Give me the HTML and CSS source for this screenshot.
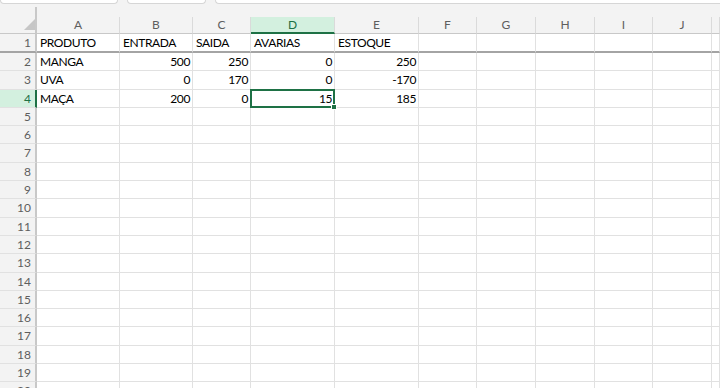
FILE: index.html
```html
<!DOCTYPE html>
<html lang="pt">
<head>
    <meta charset="UTF-8">
    <meta name="viewport" content="width=device-width, initial-scale=1.0">
    <title>Planilha de estoque</title>
    <link rel="stylesheet" href="styles.css">
</head>
<body>

<div class="top">
  <div class="tabs">
    <div class="tab tab-first"></div>
    <div class="tab tab-second"></div>
    <div class="tab tab-last"></div>
  </div>
  <div class="edge"></div>
</div>

<div id="sheet" class="sheet"></div>

<script>
    const data = [
        ["PRODUTO", "ENTRADA", "SAIDA", "AVARIAS", "ESTOQUE"],
        ["MANGA", 500, 250, 0, 250],
        ["UVA", 0, 170, 0, -170],
        ["MAÇA", 200, 0, 15, 185]
    ];
    // K is only a sliver at the right edge, so its letter is not shown
    const letters = ["A", "B", "C", "D", "E", "F", "G", "H", "I", "J", ""];
    const activeRow = 4
    const activeCol = 3
    const sheet = document.getElementById("sheet");

    function addCell(className, text) {
        const div = document.createElement("div");
        div.className = className;
        div.textContent = text;
        sheet.appendChild(div);
    }

    addCell("corner", "");
    letters.forEach(function(letter, i) {
        addCell("col-head" + (i === activeCol ? " active" : ""), letter);
    });

    for (let r = 1; r <= 20; r++) {
        let extra = r === 1 ? " frozen" : "";
        addCell("row-head" + extra + (r === activeRow ? " active" : ""), r);
        letters.forEach(function(letter, c) {
            const row = data[r - 1] || [];
            const value = row[c] === undefined ? "" : row[c];
            let cls = "cell" + extra;
            if (typeof value === "number") cls += " num";
            if (r === activeRow && c === activeCol) cls += " selected";
            addCell(cls, value);
        });
    }
</script>

</body>
</html>
```

FILE: styles.css
```css
body {
  margin: 0;
  background-color: #fff;
  font-family: Lato, "Liberation Sans", sans-serif;
  font-size: 12px;
  overflow: hidden;
}

.top {
  height: 17px;
  background-color: #f3f3f3;
}

.tabs {
  display: flex;
  gap: 9px;
  height: 4px;
}

.tab {
  box-sizing: border-box;
  background-color: #fff;
  border: 1px solid #d6d6d6;
  border-top: none;
  border-radius: 0 0 5px 5px;
}

.tab-first { width: 118px; }
.tab-second { width: 79px; }
.tab-last { flex: 1; border-right: none; border-radius: 0 0 0 5px; }

.edge {
  margin: 3px 0 0 35px;
  width: 0;
  height: 10px;
  border-right: 2px solid #c8c8c8;
}

.sheet {
  display: grid;
  grid-template-columns: 37px 83px 73px 58px 84px 84px 58px 59px 59px 58px 59px 1fr;
  grid-template-rows: 17px 19px;
  grid-auto-rows: 18.3px;
}

.sheet > div {
  box-sizing: border-box;
  white-space: nowrap;
  overflow: hidden;
}

.corner {
  position: relative;
  background-color: #f3f3f3;
  border-right: 2px solid #c8c8c8;
  border-bottom: 1px solid #c8c8c8;
}

.corner::after {
  content: "";
  position: absolute;
  right: 0;
  bottom: 3px;
  width: 0;
  height: 0;
  border-left: 11px solid transparent;
  border-bottom: 11px solid #c6c6c6;
}

.col-head {
  background-color: #f3f3f3;
  color: #5e5e5e;
  text-align: center;
  line-height: 16px;
  border-right: 1px solid #dadada;
  border-bottom: 1px solid #c8c8c8;
}

.col-head.active {
  background-color: #d3f0df;
  color: #1e7145;
  border-bottom: 2px solid #1e7145;
}

.row-head {
  background-color: #f3f3f3;
  color: #5e5e5e;
  text-align: right;
  padding-right: 4px;
  line-height: 17px;
  border-right: 2px solid #c8c8c8;
  border-bottom: 1px solid #e1e1e1;
}

.row-head.active {
  background-color: #d3f0df;
  color: #1e7145;
  border-right-color: #1e7145;
}

.cell {
  color: #000;
  padding: 0 3px;
  line-height: 17px;
  letter-spacing: -0.4px;
  border-right: 1px solid #e1e1e1;
  border-bottom: 1px solid #e1e1e1;
}

.num {
  text-align: right;
  padding-right: 2px;
}

.frozen {
  line-height: 17px;
  border-bottom: 2px solid #a4a4a4;
}

.row-head.frozen {
  border-bottom: 2px solid #a4a4a4;
}

.sheet > .selected {
  position: relative;
  overflow: visible;
  z-index: 1;
}

.selected::before {
  content: "";
  position: absolute;
  top: -1px;
  left: -1px;
  right: -1px;
  bottom: -1px;
  border: 2px solid #1e7145;
}

.selected::after {
  content: "";
  position: absolute;
  right: -3px;
  bottom: -3px;
  width: 4px;
  height: 4px;
  background-color: #1e7145;
  border: 1px solid #fff;
}
```
